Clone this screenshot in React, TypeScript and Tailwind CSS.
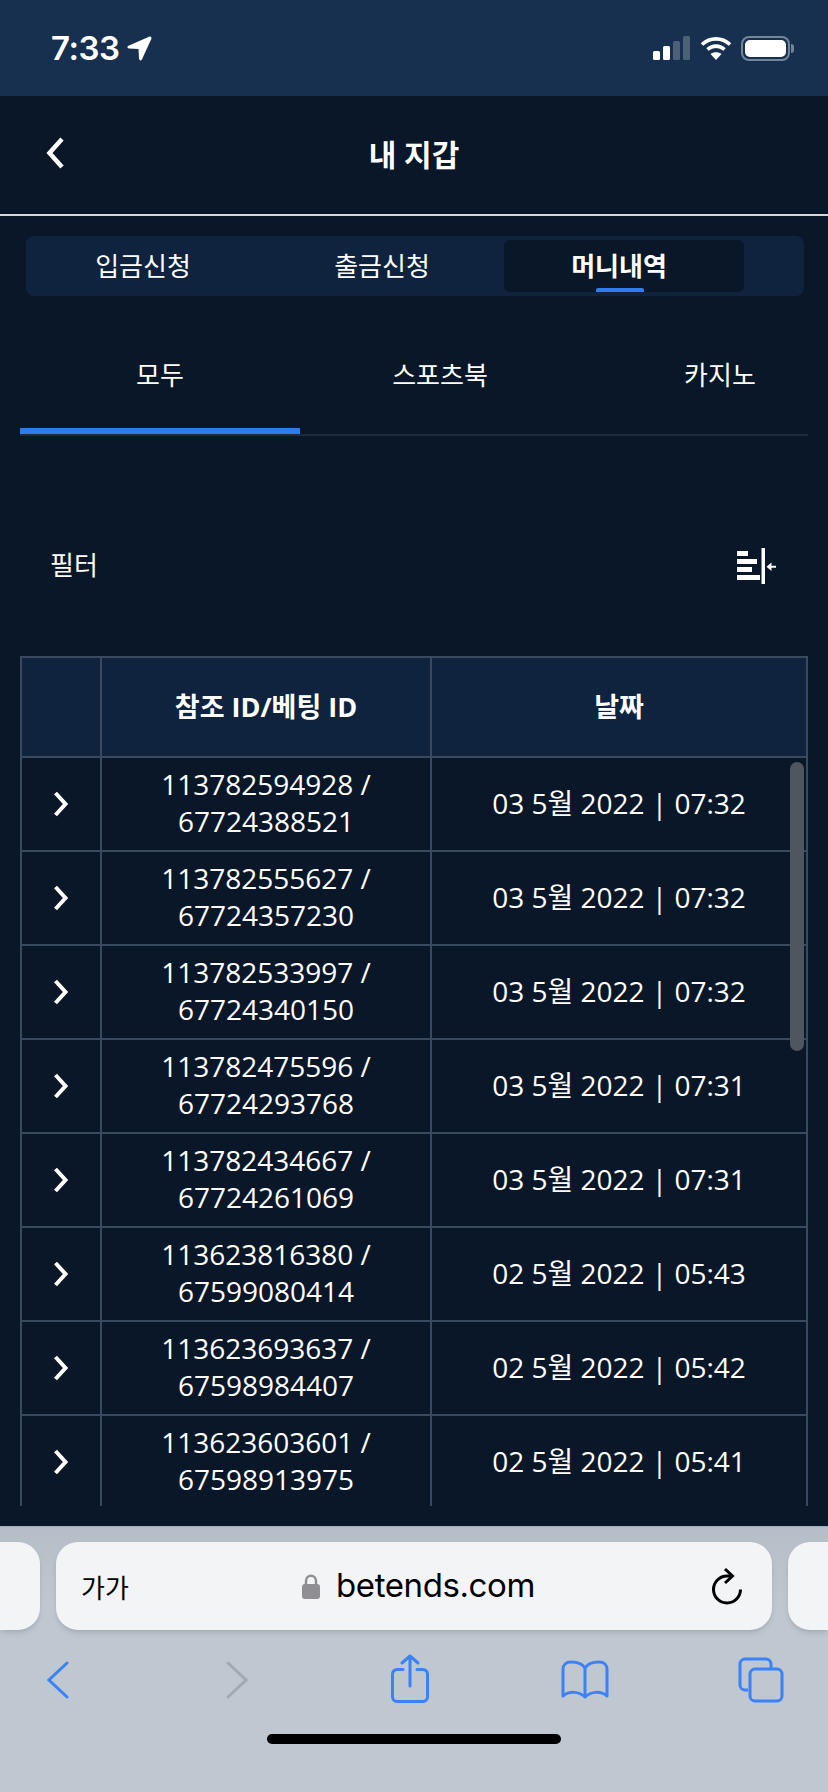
import { FC } from "react";

const rows = [
  ["113782594928", "67724388521", "03 5월 2022 | 07:32"],
  ["113782555627", "67724357230", "03 5월 2022 | 07:32"],
  ["113782533997", "67724340150", "03 5월 2022 | 07:32"],
  ["113782475596", "67724293768", "03 5월 2022 | 07:31"],
  ["113782434667", "67724261069", "03 5월 2022 | 07:31"],
  ["113623816380", "67599080414", "02 5월 2022 | 05:43"],
  ["113623693637", "67598984407", "02 5월 2022 | 05:42"],
  ["113623603601", "67598913975", "02 5월 2022 | 05:41"],
];

const FONT = "font-['Open_Sans','Noto_Sans_CJK_KR',sans-serif]";

const StatusBar: FC = () => (
  <div className="h-[96px] bg-[#17304f] flex items-center justify-between pl-[51px] pr-[34px] shrink-0">
    <div className="flex items-center gap-[8px] text-white">
      <span className="font-['Inter',sans-serif] font-semibold text-[33px] leading-none tracking-[-0.5px]">7:33</span>
      <svg width="25" height="25" viewBox="0 0 26 26" fill="#fff">
        <path d="M23.5 0.5 L1 10.5 Q-0.5 12.5 2 13 L12 13.5 L12.5 24 Q14 26.5 15.5 24.5 L25.5 2.5 Q25.5 0 23.5 0.5 Z" />
      </svg>
    </div>
    <div className="flex items-center">
      <svg width="37" height="24" viewBox="0 0 37 24" className="mr-[10px]">
        <rect x="0" y="15" width="7" height="9" rx="1.5" fill="#fff" />
        <rect x="10" y="10" width="7" height="14" rx="1.5" fill="#fff" />
        <rect x="20" y="5" width="7" height="19" rx="1.5" fill="#4c6177" />
        <rect x="30" y="0" width="7" height="24" rx="1.5" fill="#4c6177" />
      </svg>
      <svg width="32" height="24" viewBox="0 0 32 24" className="mr-[9px]" fill="none" stroke="#fff" strokeWidth="3.6">
        <path d="M2 8.5 C10 1 22 1 30 8.5" />
        <path d="M7.5 13.5 C12.5 9 19.5 9 24.5 13.5" />
        <path d="M16 24 L10.5 18 C13.5 15.5 18.5 15.5 21.5 18 Z" fill="#fff" stroke="none" />
      </svg>
      <div className="w-[49px] h-[25px] rounded-[8px] border-2 border-[#73859a] p-[2px]">
        <div className="w-full h-full rounded-[5px] bg-white" />
      </div>
      <div className="w-[3px] h-[9px] ml-[1px] rounded-r-[3px] bg-[#73859a]" />
    </div>
  </div>
);

const NavBar: FC = () => (
  <div className="h-[118px] relative flex items-center justify-center shrink-0">
    <svg width="18" height="32" viewBox="0 0 18 32" className="absolute left-[46px] top-[41px]" fill="none" stroke="#fff" strokeWidth="4.5">
      <path d="M16 2 L3.5 16 L16 30" />
    </svg>
    <span className={`${FONT} text-white font-bold text-[30px] mt-[-1px]`}>내 지갑</span>
  </div>
);

const TopTabs: FC = () => (
  <div className="ml-[26px] mr-[24px] mt-[20px] h-[60px] rounded-[8px] bg-[#10233e] py-[4px] flex shrink-0">
    <div className={`${FONT} w-[234px] flex items-center justify-center text-[26px] text-white`}>입금신청</div>
    <div className={`${FONT} w-[244px] flex items-center justify-center text-[26px] text-white`}>출금신청</div>
    <div className={`${FONT} w-[240px] relative flex items-center justify-center pr-[10px] rounded-[6px] bg-[#0a1728] text-[26px] font-bold text-white`}>
      머니내역
      <div className="absolute bottom-0 left-[92px] w-[48px] h-[4px] rounded-t-[2px] bg-[#2f7bf0]" />
    </div>
  </div>
);

const SubTabs: FC = () => (
  <div className={`${FONT} mx-[20px] mt-[20px] h-[120px] flex border-b-2 border-[#1e2b3c] text-[26px] text-white shrink-0`}>
    <div className="w-[280px] h-[118px] flex items-center justify-center border-b-[6px] border-[#2f7bf0] pt-[6px]">모두</div>
    <div className="w-[280px] flex items-center justify-center">스포츠북</div>
    <div className="flex-1 flex items-center justify-center pl-[52px]">카지노</div>
  </div>
);

const FilterRow: FC = () => (
  <div className={`${FONT} h-[220px] pt-[42px] pl-[30px] pr-[32px] mx-[20px] flex items-center justify-between text-[26px] text-white shrink-0`}>
    <span className="mt-[-4px]">필터</span>
    <svg width="39" height="36" viewBox="0 0 39 36" className="mt-[-3px]">
      <rect x="0" y="3" width="11" height="5" fill="#fff" />
      <rect x="0" y="11" width="20" height="5" fill="#fff" />
      <rect x="0" y="19" width="15" height="5" fill="#fff" />
      <rect x="0" y="27" width="23" height="5" fill="#fff" />
      <rect x="24.5" y="0" width="3.5" height="36" fill="#fff" />
      <path d="M29.5 18.7 L34.5 14.5 V17.7 H39 V19.7 H34.5 V23 Z" fill="#fff" />
    </svg>
  </div>
);

const HistoryTable: FC = () => (
  <div className="relative mx-[20px] h-[850px] overflow-hidden shrink-0">
    <div className={`${FONT} border-t-2 border-l-2 border-r-2 border-[#3a4a5e] text-white`}>
      <div className="h-[100px] flex bg-[#10233e] border-b-2 border-[#3a4a5e] font-bold text-[27px]">
        <div className="w-[80px] border-r-2 border-[#3a4a5e]" />
        <div className="w-[330px] border-r-2 border-[#3a4a5e] flex items-center justify-center">참조 ID/베팅 ID</div>
        <div className="flex-1 flex items-center justify-center">날짜</div>
      </div>
      {rows.map(([ref, bet, date]) => (
        <div key={ref} className="h-[94px] flex border-b-2 border-[#3a4a5e] text-[28px] leading-[37px]">
          <div className="w-[80px] border-r-2 border-[#3a4a5e] flex items-center justify-center">
            <svg width="16" height="26" viewBox="0 0 16 26" fill="none" stroke="#fff" strokeWidth="4">
              <path d="M2.5 2 L12.5 13 L2.5 24" />
            </svg>
          </div>
          <div className="w-[330px] border-r-2 border-[#3a4a5e] flex flex-col items-center justify-center pb-[2px]">
            <span>{ref} /</span>
            <span>{bet}</span>
          </div>
          <div className="flex-1 flex items-center justify-center pb-[2px]">{date}</div>
        </div>
      ))}
    </div>
    <div className="absolute left-[770px] top-[106px] w-[14px] h-[289px] rounded-full bg-[#50565f]" />
  </div>
);

const SafariChrome: FC = () => (
  <div className="mt-[20px] flex-1 border-t border-[#a4aeb8] bg-gradient-to-b from-[#b5bec7] to-[#bfc7d1] to-[30%]">
    <div className="mt-[15px] h-[88px] flex gap-[16px]">
      <div className="w-[40px] rounded-r-[22px] bg-[#f2f4f6] shadow-md" />
      <div className="w-[716px] rounded-[22px] bg-[#f2f4f6] shadow-md flex items-center pl-[25px] pr-[29px] text-black">
        <span className="font-['Noto_Sans_CJK_KR',sans-serif] text-[26px] w-[52px]">가가</span>
        <div className="ml-[169px] flex items-center">
          <svg width="18" height="26" viewBox="0 0 18 26" className="mr-[16px]">
            <path d="M4 12 V8 C4 1 14 1 14 8 V12" fill="none" stroke="#8e8e93" strokeWidth="2.5" />
            <rect x="0" y="11" width="18" height="15" rx="3" fill="#8e8e93" />
          </svg>
          <span className="font-['Inter',sans-serif] text-[33px] tracking-[-0.4px]">betends.com</span>
        </div>
        <svg width="32" height="38" viewBox="0 0 32 38" className="ml-auto" fill="none" stroke="#000" strokeWidth="3">
          <path d="M21 9 H16 A13.5 13.5 0 1 0 29.5 22.5" />
          <path d="M14 2 L21.5 9 L14 16" />
        </svg>
      </div>
      <div className="flex-1 rounded-l-[22px] bg-[#f2f4f6] shadow-md" />
    </div>
    <div className="relative h-[136px]">
      <svg width="22" height="38" viewBox="0 0 22 38" className="absolute left-[47px] top-[31px]" fill="none" stroke="#3b82f6" strokeWidth="3" strokeLinecap="round">
        <path d="M20 2 L2 19 L20 36" />
      </svg>
      <svg width="22" height="38" viewBox="0 0 22 38" className="absolute left-[226px] top-[31px]" fill="none" stroke="#a3a9b1" strokeWidth="3" strokeLinecap="round">
        <path d="M2 2 L20 19 L2 36" />
      </svg>
      <svg width="38" height="50" viewBox="0 0 38 50" className="absolute left-[391px] top-[24px]" fill="none" stroke="#3b82f6" strokeWidth="3" strokeLinecap="round" strokeLinejoin="round">
        <path d="M12 15.5 H6 A4.5 4.5 0 0 0 1.5 20 V43 A4.5 4.5 0 0 0 6 47.5 H32 A4.5 4.5 0 0 0 36.5 43 V20 A4.5 4.5 0 0 0 32 15.5 H26" />
        <path d="M19 32 V2 M11 9 L19 2 L27 9" />
      </svg>
      <svg width="48" height="40" viewBox="0 0 48 40" className="absolute left-[561px] top-[30px]" fill="none" stroke="#3b82f6" strokeWidth="3" strokeLinejoin="round">
        <path d="M24 8 C21 3 15 2 10 2 C5 2 2 5 2 9 V36 C8 31 18 31 24 37 C30 31 40 31 46 36 V9 C46 5 43 2 38 2 C33 2 27 3 24 8 Z" />
        <path d="M24 8 V37" />
      </svg>
      <svg width="46" height="46" viewBox="0 0 46 46" className="absolute left-[738px] top-[27px]" fill="none" stroke="#3b82f6" strokeWidth="3">
        <path d="M10 33 H7 A5 5 0 0 1 2 28 V7 A5 5 0 0 1 7 2 H27 A5 5 0 0 1 33 7 V11" />
        <rect x="12" y="12" width="32" height="32" rx="5" />
      </svg>
      <div className="absolute left-[267px] top-[104px] w-[294px] h-[10px] rounded-full bg-black" />
    </div>
  </div>
);

export default function App() {
  return (
    <div className="w-[828px] h-[1792px] bg-[#0a1728] flex flex-col overflow-hidden">
      <StatusBar />
      <NavBar />
      <div className="h-[2px] bg-[#d4d6d8] shrink-0" />
      <TopTabs />
      <SubTabs />
      <FilterRow />
      <HistoryTable />
      <SafariChrome />
    </div>
  );
}
